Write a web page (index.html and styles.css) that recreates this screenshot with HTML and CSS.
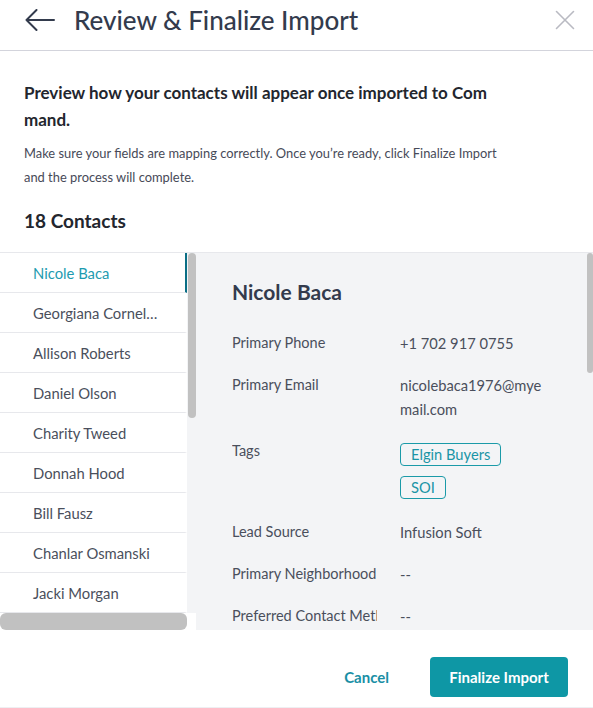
FILE: index.html
```html
<!DOCTYPE html>
<html lang="en">
<head>
<meta charset="utf-8">
<title>Review &amp; Finalize Import</title>
<link rel="stylesheet" href="styles.css">
</head>
<body>
<div class="modal">
  <header class="modal-header">
    <button class="icon-btn back" aria-label="Back">
      <svg width="30" height="22" viewBox="0 0 30 22"><path d="M1.5 11H29M11.5 1L1.5 11L11.5 21" fill="none" stroke="#333b4d" stroke-width="2" stroke-linecap="round" stroke-linejoin="round"/></svg>
    </button>
    <h1 class="title">Review &amp; Finalize Import</h1>
    <button class="icon-btn close" aria-label="Close">
      <svg width="20" height="20" viewBox="0 0 20 20"><path d="M1.5 1.5L18.5 18.5M18.5 1.5L1.5 18.5" fill="none" stroke="#b9bac2" stroke-width="1.6" stroke-linecap="round"/></svg>
    </button>
  </header>

  <section class="intro">
    <h2 class="intro-heading">Preview how your contacts will appear once imported to Command.</h2>
    <p class="intro-text">Make sure your fields are mapping correctly. Once you’re ready, click Finalize Import and the process will complete.</p>
    <h3 class="count">18 Contacts</h3>
  </section>

  <div class="preview">
    <div class="list-col">
      <div class="list-area">
        <div class="list-viewport">
          <ul class="contacts">
            <li class="contact active">Nicole Baca</li>
            <li class="contact">Georgiana Cornelius</li>
            <li class="contact">Allison Roberts</li>
            <li class="contact">Daniel Olson</li>
            <li class="contact">Charity Tweed</li>
            <li class="contact">Donnah Hood</li>
            <li class="contact">Bill Fausz</li>
            <li class="contact">Chanlar Osmanski</li>
            <li class="contact">Jacki Morgan</li>
            <li class="contact">Marcus Whitfield</li>
            <li class="contact">Leanne Park</li>
            <li class="contact">Tomas Rivera</li>
            <li class="contact">Heather Lang</li>
            <li class="contact">Gregory Mills</li>
            <li class="contact">Sandra Keene</li>
            <li class="contact">Victor Hale</li>
            <li class="contact">Renee Castillo</li>
            <li class="contact">Owen Bradley</li>
          </ul>
        </div>
        <div class="vtrack list-vtrack"><div class="vthumb list-vthumb"></div></div>
      </div>
      <div class="htrack"><div class="hthumb"></div><div class="corner"></div></div>
    </div>

    <div class="details">
      <div class="details-viewport">
        <h4 class="contact-name">Nicole Baca</h4>
        <dl class="fields">
          <div class="field"><dt>Primary Phone</dt><dd>+1 702 917 0755</dd></div>
          <div class="field"><dt>Primary Email</dt><dd class="break">nicolebaca1976@myemail.com</dd></div>
          <div class="field"><dt>Tags</dt><dd class="tags"><span class="tag">Elgin Buyers</span><span class="tag">SOI</span></dd></div>
          <div class="field"><dt>Lead Source</dt><dd>Infusion Soft</dd></div>
          <div class="field"><dt>Primary Neighborhood</dt><dd>--</dd></div>
          <div class="field"><dt>Preferred Contact Method</dt><dd>--</dd></div>
          <div class="field"><dt>Secondary Phone</dt><dd>--</dd></div>
          <div class="field"><dt>Secondary Email</dt><dd>--</dd></div>
          <div class="field"><dt>Birthday</dt><dd>--</dd></div>
        </dl>
      </div>
      <div class="vtrack details-vtrack"><div class="vthumb details-vthumb"></div></div>
    </div>
  </div>

  <footer class="modal-footer">
    <button class="btn-link">Cancel</button>
    <button class="btn-primary">Finalize Import</button>
  </footer>
</div>
</body>
</html>
```

FILE: styles.css
```css
* { box-sizing: border-box; }

html, body {
  margin: 0;
  padding: 0;
  background: #ffffff;
}

body {
  font-family: Lato, "Open Sans", "Liberation Sans", sans-serif;
  color: #4a4f5c;
  -webkit-font-smoothing: antialiased;
}

.modal {
  width: 593px;
  height: 708px;
  display: flex;
  flex-direction: column;
  background: #fff;
  overflow: hidden;
}

/* Header */
.modal-header {
  height: 51px;
  display: flex;
  align-items: flex-start;
  padding: 9px 18px 0 25px;
  border-bottom: 1px solid #d3d4dc;
  flex-shrink: 0;
}

.icon-btn {
  background: none;
  border: 0;
  padding: 0;
  margin: 0;
  display: flex;
  align-items: center;
  justify-content: center;
  cursor: pointer;
}

.back { width: 30px; height: 22px; }

.title {
  margin: 0 0 0 19px;
  font-size: 26px;
  line-height: 22px;
  font-weight: 500;
  color: #333b4d;
  flex: 1;
}

.close { width: 20px; height: 20px; margin-top: 1px; }

/* Intro */
.intro {
  padding: 28px 24px 18px 24px;
  border-bottom: 1px solid #e7e8ec;
  flex-shrink: 0;
}

.intro-heading {
  margin: 0;
  width: 470px;
  font-size: 17px;
  line-height: 27px;
  font-weight: 700;
  color: #23262e;
  word-break: break-all;
}

.intro-text {
  margin: 8px 0 0;
  width: 482px;
  font-size: 12.9px;
  line-height: 24px;
  color: #474a58;
}

.count {
  margin: 18px 0 0;
  font-size: 19px;
  line-height: 27px;
  font-weight: 700;
  color: #23262e;
}

/* Preview */
.preview {
  display: flex;
  height: 377px;
  flex-shrink: 0;
}

.list-col {
  width: 196px;
  flex-shrink: 0;
  display: flex;
  flex-direction: column;
}

.list-area {
  flex: 1;
  display: flex;
  min-height: 0;
}

.list-viewport {
  width: 187px;
  overflow: hidden;
  background: #fff;
}

.contacts {
  list-style: none;
  margin: 0;
  padding: 0;
}

.contact {
  width: 187px;
  height: 40px;
  line-height: 40px;
  padding: 0 27px 0 33px;
  font-size: 14.8px;
  color: #4a4f5c;
  border-bottom: 1px solid #e7e8ec;
  border-right: 2px solid transparent;
  white-space: nowrap;
  overflow: hidden;
  text-overflow: ellipsis;
}

.contact.active {
  color: #1d9bb0;
  border-right-color: #0b6f86;
}

.vtrack {
  flex-shrink: 0;
  background: #f3f4f6;
}

.list-vtrack { width: 9px; padding-left: 1px; }

.vthumb { background: #c1c1c1; }

.list-vthumb {
  width: 8px;
  height: 165px;
  border-radius: 4px;
}

.htrack {
  height: 17px;
  display: flex;
  flex-shrink: 0;
}

.hthumb {
  width: 187px;
  background: #c1c1c1;
  border-radius: 6px;
}

.corner {
  width: 9px;
  background: #fff;
}

.details {
  flex: 1;
  display: flex;
  background: #f3f4f6;
  min-width: 0;
}

.details-viewport {
  flex: 1;
  overflow: hidden;
  padding: 25px 0 0 36px;
}

.details-vtrack { width: 6px; }

.details-vthumb {
  width: 6px;
  height: 120px;
  border-radius: 3px;
}

.contact-name {
  margin: 0;
  font-size: 21px;
  line-height: 28px;
  font-weight: 700;
  color: #333b4d;
}

.fields { margin: 25px 0 0; }

.field {
  display: grid;
  grid-template-columns: 168px 149px;
  margin-bottom: 18px;
  font-size: 14.7px;
  line-height: 24px;
}

.field dt {
  color: #4a4f5c;
  font-size: 14.5px;
  white-space: nowrap;
  overflow: hidden;
  width: 145px;
}

.field dd {
  margin: 0;
  color: #4a4f5c;
}

.field dd.break { word-break: break-all; }

.tags {
  display: flex;
  flex-direction: column;
  align-items: flex-start;
  gap: 10px;
  padding: 4px 0 3px;
}

.tag {
  display: inline-block;
  height: 23px;
  line-height: 21px;
  padding: 0 10px;
  border: 1px solid #1a9aa8;
  border-radius: 4px;
  color: #1a95a6;
  font-size: 14.7px;
}

/* Footer */
.modal-footer {
  height: 78px;
  display: flex;
  align-items: flex-start;
  justify-content: flex-end;
  gap: 20px;
  padding: 27px 25px 0 0;
  border-bottom: 1px solid #eeeff2;
  flex-shrink: 0;
}

.btn-link {
  height: 40px;
  background: none;
  border: 0;
  padding: 0 21px;
  font-family: inherit;
  font-size: 15px;
  font-weight: 700;
  color: #1a8fa5;
  cursor: pointer;
}

.btn-primary {
  width: 138px;
  height: 40px;
  background: #0e97a5;
  border: 0;
  border-radius: 4px;
  color: #fff;
  font-family: inherit;
  font-size: 15px;
  font-weight: 700;
  cursor: pointer;
}
```
